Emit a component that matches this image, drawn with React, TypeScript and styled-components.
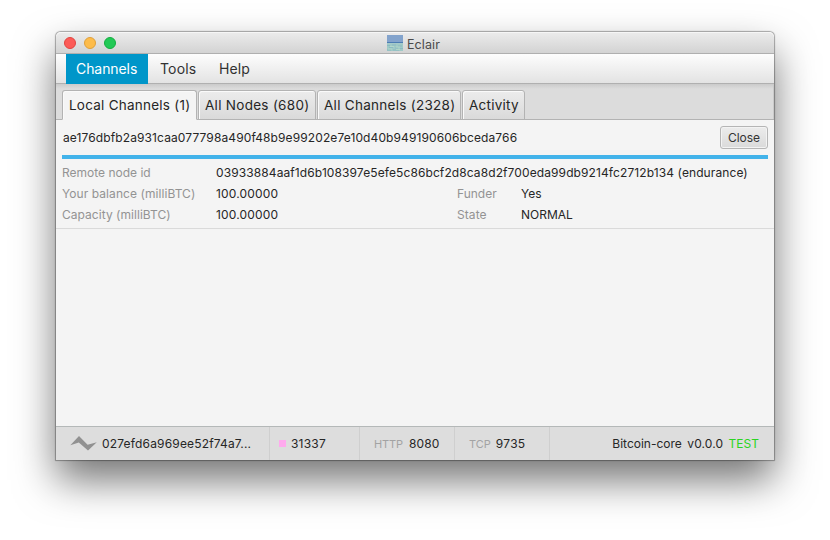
import React from "react";
import styled, { createGlobalStyle } from "styled-components";

const Global = createGlobalStyle`
  *, *::before, *::after { box-sizing: border-box; }
  html, body { margin: 0; background: #fff; }
  body {
    width: 830px;
    height: 540px;
    overflow: hidden;
    font-family: Inter, Roboto, "Liberation Sans", sans-serif;
    color: #262626;
  }
`;

const Desktop = styled.main`
  width: 830px;
  height: 540px;
  padding: 32px 56px 80px;
  overflow: hidden;
`;

const Window = styled.section`
  width: 718px;
  height: 428px;
  display: flex;
  flex-direction: column;
  background: #f4f4f4;
  border-radius: 5px 5px 0 0;
  box-shadow: 0 0 1px 0.5px rgba(0, 0, 0, 0.32), 0 20px 40px rgba(0, 0, 0, 0.55);
`;

const TitleBar = styled.header`
  height: 22px;
  flex: none;
  display: grid;
  grid-template-columns: 1fr auto 1fr;
  align-items: center;
  padding: 1px 8px 0;
  border-radius: 5px 5px 0 0;
  border-bottom: 1px solid #afafaf;
  background: linear-gradient(#ececec, #d3d3d3);
  box-shadow: inset 0 1px 0 #f6f6f6;
`;

const Lights = styled.div`
  display: flex;
  gap: 8px;
`;

const Light = styled.span<{ $fill: string; $ring: string }>`
  width: 12px;
  height: 12px;
  border-radius: 50%;
  background: ${(p) => p.$fill};
  border: 1px solid ${(p) => p.$ring};
`;

const WindowTitle = styled.div`
  display: flex;
  align-items: center;
  gap: 4px;
  margin-right: 3px;
  color: #4a4a4a;
`;

const Text = styled.span<{ $size?: number; $track?: number; $color?: string }>`
  font-size: ${(p) => p.$size ?? 12}px;
  letter-spacing: ${(p) => p.$track ?? 0.07}px;
  color: ${(p) => p.$color ?? "inherit"};
  line-height: 16px;
  white-space: pre;
`;

const TitleText = styled(Text)`
  padding-top: 2px;
  margin-bottom: -1px;
`;

const MenuBar = styled.nav`
  height: 30px;
  flex: none;
  display: flex;
  gap: 2px;
  padding-left: 10px;
  border-bottom: 1px solid #b0b0b0;
  background: linear-gradient(#fdfdfd, #e3e3e3);
`;

const MenuItem = styled.div<{ $active?: boolean; $width: number }>`
  width: ${(p) => p.$width}px;
  height: ${(p) => (p.$active ? 30 : 29)}px;
  padding: 6px 0 0 10px;
  line-height: 16px;
  color: ${(p) => (p.$active ? "#fff" : "#323232")};
  background: ${(p) => (p.$active ? "#0096c9" : "transparent")};
`;

const TabStrip = styled.div`
  height: 36px;
  flex: none;
  display: flex;
  gap: 1px;
  padding: 6px 6px 0;
  background: linear-gradient(#cbcbcb, #dcdcdc 5px);
  box-shadow: inset 0 -1px 0 #b3b3b3, inset -1px 0 0 #cacaca;
`;

const Tab = styled.div<{ $active?: boolean; $width: number }>`
  width: ${(p) => p.$width}px;
  height: 30px;
  padding: 5px 0 0 6px;
  border: 1px solid #b3b3b3;
  border-bottom-color: ${(p) => (p.$active ? "#f4f4f4" : "#b3b3b3")};
  border-radius: 3px 3px 0 0;
  background: ${(p) => (p.$active ? "#f4f4f4" : "linear-gradient(#ececec, #dadada)")};
  box-shadow: inset 1px 1px 0 #fafafa;
  line-height: 16px;
`;

const Content = styled.div`
  flex: 1;
`;

const Channel = styled.article`
  height: 109px;
  padding: 6px 6px 0;
  border-bottom: 1px solid #dadada;
`;

const ChannelHead = styled.div`
  height: 23px;
  display: flex;
  align-items: center;
  justify-content: space-between;
  padding-left: 1px;
`;

const CloseButton = styled.button`
  width: 48px;
  height: 23px;
  padding: 0;
  font: inherit;
  line-height: 16px;
  color: #333;
  border: 1px solid #b5b5b5;
  border-radius: 3px;
  background: linear-gradient(#ececec, #dadada);
  box-shadow: inset 0 0 0 1px #f3f3f3;
  display: flex;
  align-items: center;
  justify-content: center;
`;

const BalanceBar = styled.div`
  height: 4px;
  margin: 6px 0 3px;
  background: #42b3ea;
`;

const Details = styled.div`
  display: grid;
  grid-template-columns: 154px 241px 64px 1fr;
  grid-auto-rows: 21px;
  align-items: center;
`;

const WideValue = styled.div`
  grid-column: 2 / -1;
  display: flex;
`;

const StatusBar = styled.footer`
  height: 34px;
  flex: none;
  display: flex;
  border-top: 1px solid #b4b8b8;
  background: #dddddd;
`;

const StatusCell = styled.div<{ $width?: number; $pad: number; $gap: number; $last?: boolean }>`
  ${(p) => (p.$width ? `width: ${p.$width}px;` : "flex: 1; justify-content: flex-end;")}
  display: flex;
  align-items: center;
  gap: ${(p) => p.$gap}px;
  padding: 0 15px 0 ${(p) => p.$pad}px;
  border-right: ${(p) => (p.$last ? "0" : "1px solid #cfcfcf")};
`;

const ColorSwatch = styled.span`
  width: 7px;
  height: 7px;
  background: #ffaaee;
`;

const AppIcon = () => (
  <svg width="16" height="16" viewBox="0 0 16 16">
    <rect width="16" height="8" fill="#83a3cc" />
    <rect y="7" width="16" height="1.2" fill="#4c7db4" />
    <rect y="8.2" width="16" height="7.8" fill="#a0cac7" />
    <path
      d="M0 10.5h3M5 10h4M11 11h4M2 12.5h4M8 13h3M13 13.5h3M0 15h4M6 15h6"
      stroke="#84b5c2"
      strokeWidth="0.7"
    />
    <path d="M3 11.5h4M9 12h4M1 14h4M9 14.5h4" stroke="#b9dcc9" strokeWidth="0.8" />
  </svg>
);

const EclairLogo = () => (
  <svg width="27" height="15" viewBox="0 0 27 15">
    <path d="M0.3 9.2L9 0L17.6 8.8L26.8 6.3L18 14.6L8.8 6.6Z" fill="#919191" />
  </svg>
);

const Label = ({ children, track }: { children: string; track?: number }) => (
  <Text $color="#939393" $track={track}>{children}</Text>
);

export default function App() {
  return (
    <Desktop>
      <Global />
      <Window>
        <TitleBar>
          <Lights>
            <Light $fill="#fc5b57" $ring="#e2443f" />
            <Light $fill="#fdbc4b" $ring="#e0a03a" />
            <Light $fill="#22c956" $ring="#13ae3f" />
          </Lights>
          <WindowTitle>
            <AppIcon />
            <TitleText $size={12.5} $track={0.1}>Eclair</TitleText>
          </WindowTitle>
        </TitleBar>
        <MenuBar>
          <MenuItem $active $width={82}><Text $size={14} $track={-0.08}>Channels</Text></MenuItem>
          <MenuItem $width={57}><Text $size={14} $track={0.15}>Tools</Text></MenuItem>
          <MenuItem $width={60}><Text $size={14}>Help</Text></MenuItem>
        </MenuBar>
        <TabStrip>
          <Tab $active $width={135}><Text $size={13.5} $track={0.24}>Local Channels (1)</Text></Tab>
          <Tab $width={118}><Text $size={13.5} $track={0.29}>All Nodes (680)</Text></Tab>
          <Tab $width={144}><Text $size={13.5} $track={0.28}>All Channels (2328)</Text></Tab>
          <Tab $width={63}><Text $size={13.5} $track={0.24}>Activity</Text></Tab>
        </TabStrip>
        <Content>
          <Channel>
            <ChannelHead>
              <Text $track={0.11}>ae176dbfb2a931caa077798a490f48b9e99202e7e10d40b949190606bceda766</Text>
              <CloseButton><Text $track={0}>Close</Text></CloseButton>
            </ChannelHead>
            <BalanceBar />
            <Details>
              <Label track={0}>Remote node id</Label>
              <WideValue>
                <Text $track={0.1}>03933884aaf1d6b108397e5efe5c86bcf2d8ca8d2f700eda99db9214fc2712b134 (endurance)</Text>
              </WideValue>
              <Label>Your balance (milliBTC)</Label>
              <Text $track={0.18}>100.00000</Text>
              <Label track={0}>Funder</Label>
              <Text>Yes</Text>
              <Label track={0.04}>Capacity (milliBTC)</Label>
              <Text $track={0.18}>100.00000</Text>
              <Label>State</Label>
              <Text $track={0}>NORMAL</Text>
            </Details>
          </Channel>
        </Content>
        <StatusBar>
          <StatusCell $width={214} $pad={14} $gap={5}>
            <EclairLogo />
            <Text $track={0.17}>027efd6a969ee52f74a7...</Text>
          </StatusCell>
          <StatusCell $width={90} $pad={9} $gap={5}>
            <ColorSwatch />
            <Text $track={0.2}>31337</Text>
          </StatusCell>
          <StatusCell $width={95} $pad={14} $gap={6}>
            <Text $size={11} $track={-0.1} $color="#a3a3a3">HTTP</Text>
            <Text $track={0.1}>8080</Text>
          </StatusCell>
          <StatusCell $width={95} $pad={14} $gap={5}>
            <Text $size={11} $track={0} $color="#a3a3a3">TCP</Text>
            <Text $track={0.25}>9735</Text>
          </StatusCell>
          <StatusCell $last $pad={0} $gap={5.5}>
            <Text $track={0}>Bitcoin-core</Text>
            <Text $track={0.1}>v0.0.0</Text>
            <Text $track={0} $color="#2bd421">TEST</Text>
          </StatusCell>
        </StatusBar>
      </Window>
    </Desktop>
  );
}
